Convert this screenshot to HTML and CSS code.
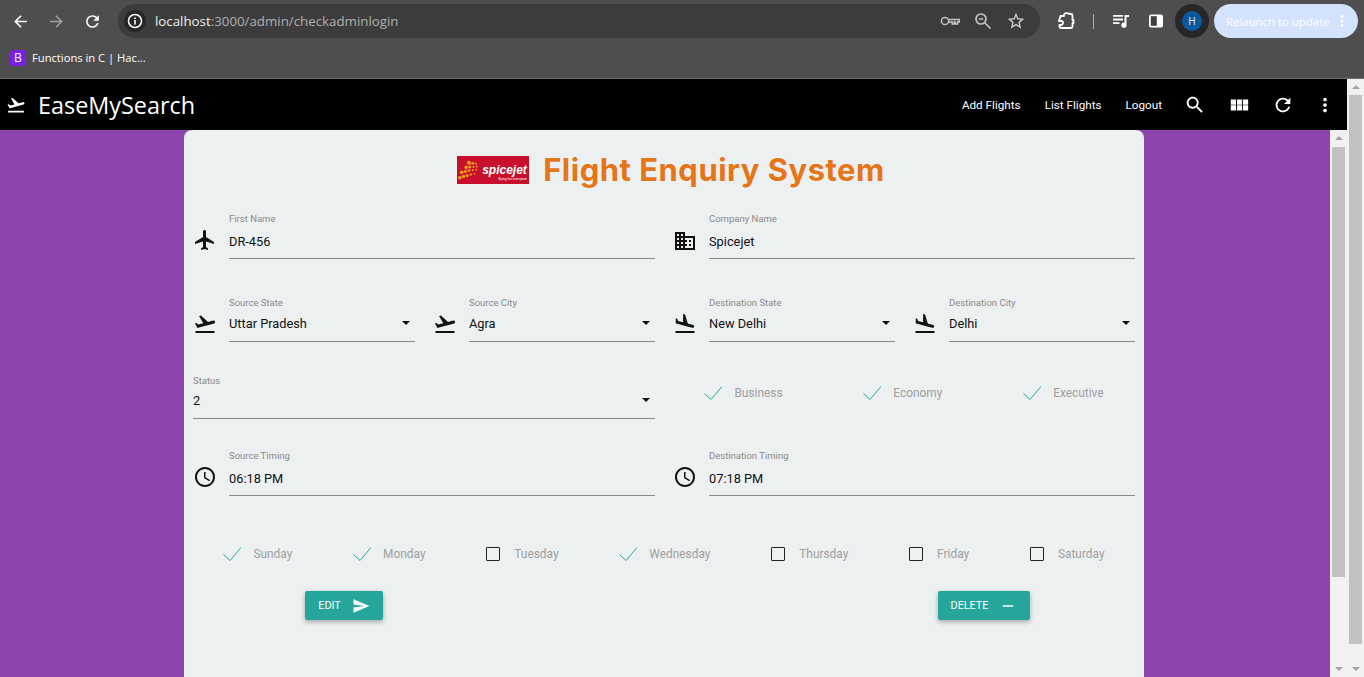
FILE: index.html
```html
<!DOCTYPE html>
<html lang="en">
<head>
    <meta charset="UTF-8">
    <meta name="viewport" content="width=device-width, initial-scale=1.0">
    <title>EaseMySearch</title>
    <link rel="stylesheet" href="styles.css">
</head>
<body>
    <svg class="defs" width="0" height="0">
        <symbol id="i-flight" viewBox="0 0 24 24"><path d="M21 16v-2l-8-5V3.5c0-.83-.67-1.5-1.5-1.5S10 2.67 10 3.5V9l-8 5v2l8-2.5V19l-2 1.5V22l3.5-1 3.5 1v-1.5L13 19v-5.5l8 2.5z"/></symbol>
        <symbol id="i-takeoff" viewBox="0 0 24 24"><path d="M2.5 19h19v2h-19zm19.57-9.36c-.21-.8-1.04-1.28-1.84-1.06L14.92 10l-6.9-6.43-1.93.51 4.14 7.17-4.97 1.33-1.97-1.54-1.45.39 1.82 3.16.77 1.33 1.6-.43 5.31-1.42 4.35-1.16L21 11.49c.81-.23 1.28-1.05 1.07-1.85z"/></symbol>
        <symbol id="i-land" viewBox="0 0 24 24"><path d="M2.5 19h19v2h-19zm7.18-5.73l4.35 1.16 5.31 1.42c.8.21 1.62-.26 1.84-1.06.21-.8-.26-1.62-1.06-1.84l-5.31-1.42-2.76-9.02L10.12 2v8.28L5.15 8.95l-.93-2.32-1.45-.39v5.17l1.6.43 5.31 1.43z"/></symbol>
        <symbol id="i-business" viewBox="0 0 24 24"><path d="M12 7V3H2v18h20V7H12zM6 19H4v-2h2v2zm0-4H4v-2h2v2zm0-4H4V9h2v2zm0-4H4V5h2v2zm4 12H8v-2h2v2zm0-4H8v-2h2v2zm0-4H8V9h2v2zm0-4H8V5h2v2zm10 12h-8v-2h2v-2h-2v-2h2v-2h-2V9h8v10zm-2-8h-2v2h2v-2zm0 4h-2v2h2v-2z"/></symbol>
        <symbol id="i-clock" viewBox="0 0 24 24"><path d="M11.99 2C6.47 2 2 6.48 2 12s4.47 10 9.99 10C17.52 22 22 17.52 22 12S17.52 2 11.99 2zM12 20c-4.42 0-8-3.58-8-8s3.58-8 8-8 8 3.58 8 8-3.58 8-8 8zm.5-13H11v6l5.25 3.15.75-1.23-4.5-2.67z"/></symbol>
        <symbol id="i-search" viewBox="0 0 24 24"><path d="M15.5 14h-.79l-.28-.27C15.41 12.59 16 11.11 16 9.5 16 5.91 13.09 3 9.5 3S3 5.91 3 9.5 5.91 16 9.5 16c1.61 0 3.09-.59 4.23-1.57l.27.28v.79l5 4.99L20.49 19l-4.99-5zm-6 0C7.01 14 5 11.99 5 9.5S7.01 5 9.5 5 14 7.01 14 9.5 11.99 14 9.5 14z"/></symbol>
        <symbol id="i-module" viewBox="0 0 24 24"><path d="M3 11.6h5.8V6H3v5.6zm0 6.4h5.8v-5.6H3V18zm6.8 0h5.4v-5.6H9.8V18zm6.4 0H22v-5.6h-5.8V18zM9.8 11.6h5.4V6H9.8v5.6zM16.2 6v5.6H22V6h-5.8z"/></symbol>
        <symbol id="i-refresh" viewBox="0 0 24 24"><path d="M17.65 6.35C16.2 4.9 14.21 4 12 4c-4.42 0-7.99 3.58-7.99 8s3.57 8 7.99 8c3.73 0 6.84-2.55 7.73-6h-2.08c-.82 2.33-3.04 4-5.65 4-3.31 0-6-2.69-6-6s2.69-6 6-6c1.66 0 3.14.69 4.22 1.78L13 11h7V4l-2.35 2.35z"/></symbol>
        <symbol id="i-more" viewBox="0 0 24 24"><path d="M12 8c1.1 0 2-.9 2-2s-.9-2-2-2-2 .9-2 2 .9 2 2 2zm0 2c-1.1 0-2 .9-2 2s.9 2 2 2 2-.9 2-2-.9-2-2-2zm0 6c-1.1 0-2 .9-2 2s.9 2 2 2 2-.9 2-2-.9-2-2-2z"/></symbol>
        <symbol id="i-send" viewBox="0 0 24 24"><path d="M2.01 21L23 12 2.01 3 2 10l15 2-15 2z"/></symbol>
        <symbol id="i-remove" viewBox="0 0 24 24"><path d="M19 13H5v-2h14v2z"/></symbol>
        <symbol id="i-back" viewBox="0 0 24 24"><path d="M20 11H7.83l5.59-5.59L12 4l-8 8 8 8 1.41-1.41L7.83 13H20v-2z"/></symbol>
        <symbol id="i-forward" viewBox="0 0 24 24"><path d="M12 4l-1.41 1.41L16.17 11H4v2h12.17l-5.58 5.59L12 20l8-8z"/></symbol>
        <symbol id="i-star" viewBox="0 0 24 24"><path d="M22 9.24l-7.19-.62L12 2 9.19 8.63 2 9.24l5.46 4.73L5.82 21 12 17.27 18.18 21l-1.63-7.03L22 9.24zM12 15.4l-3.76 2.27 1-4.28-3.32-2.88 4.38-.38L12 6.1l1.71 4.04 4.38.38-3.32 2.88 1 4.28L12 15.4z"/></symbol>
        <symbol id="i-check" viewBox="0 0 18 14"><polyline points="0.5,7.5 7,13.5 18,0.5"/></symbol>
    </svg>

    <!-- browser top -->
    <header class="browser">
        <div class="toolbar">
            <button class="tool"><svg class="ico"><use href="#i-back"/></svg></button>
            <button class="tool tool-off"><svg class="ico"><use href="#i-forward"/></svg></button>
            <button class="tool"><svg class="ico"><use href="#i-refresh"/></svg></button>
            <div class="omnibox">
                <span class="site-info">
                    <svg width="16" height="16" viewBox="0 0 16 16"><circle cx="8" cy="8" r="6.5" fill="none" stroke="#fff" stroke-width="1.5"/><rect x="7.2" y="7" width="1.6" height="4.6" fill="#fff"/><rect x="7.2" y="4.4" width="1.6" height="1.6" fill="#fff"/></svg>
                </span>
                <span class="url"><b>localhost</b>:3000/admin/checkadminlogin</span>
                <span class="omni-icons">
                    <svg width="20" height="20" viewBox="0 0 20 20" fill="none" stroke="#c4c4c4" stroke-width="1.5"><circle cx="5" cy="10" r="3.6"/><path d="M8.6 8.4h10.6v2.6h-1.6v2h-2.2v-2h-1.2v2h-2v-2H8.6"/></svg>
                    <svg width="20" height="20" viewBox="0 0 20 20" fill="none" stroke="#c4c4c4" stroke-width="1.7"><circle cx="8" cy="8" r="5"/><path d="M12 12l5.5 5.5M5.8 8h4.4"/></svg>
                    <svg class="ico-star"><use href="#i-star"/></svg>
                </span>
            </div>
            <svg class="puzzle" width="20" height="20" viewBox="0 0 20 20" fill="none" stroke="#fff" stroke-width="1.8" stroke-linejoin="round"><path d="M4.5 5H8V4a2 2 0 0 1 2.2-1.8L15 3a1.5 1.5 0 0 1 1.5 1.5V9h1v3h-1v3.5A1.5 1.5 0 0 1 15 17H5a1.5 1.5 0 0 1-1.5-1.5V14H5a2 2 0 0 0 0-4H3l1.5-5z"/></svg>
            <span class="sep"></span>
            <svg class="queue" width="18" height="18" viewBox="0 0 18 18" fill="#fff"><path d="M1 3h10v1.8H1zM1 6.6h10v1.8H1zM1 10.2h6.5V12H1z"/><path d="M12.5 3H17v2h-2.5v8.2a2.6 2.6 0 1 1-2-2.5z"/></svg>
            <svg class="panel" width="16" height="16" viewBox="0 0 16 16"><rect x="1" y="1.5" width="14" height="13" rx="2" fill="#fff"/><rect x="2.8" y="3.2" width="6" height="9.6" fill="#3f3f3f"/></svg>
            <span class="avatar"><span class="avatar-in">H</span></span>
            <div class="relaunch">Relaunch to update<svg class="relaunch-more"><use href="#i-more"/></svg></div>
        </div>
        <div class="bookmarks">
            <span class="bm-icon">B</span>
            <span class="bm-text">Functions in C | Hac...</span>
        </div>
    </header>

    <div class="viewport">
        <div class="app">
            <nav class="navbar">
                <svg class="nav-plane"><use href="#i-takeoff"/></svg>
                <a class="brand">EaseMySearch</a>
                <ul class="nav-links">
                    <li>Add Flights</li>
                    <li>List Flights</li>
                    <li>Logout</li>
                </ul>
                <div class="nav-icons">
                    <svg class="ico"><use href="#i-search"/></svg>
                    <svg class="ico"><use href="#i-module"/></svg>
                    <svg class="ico"><use href="#i-refresh"/></svg>
                    <svg class="ico"><use href="#i-more"/></svg>
                </div>
            </nav>

            <div class="content">
                <main class="main">
                    <section class="card">
                        <div class="card-head">
                            <div class="logo">
                                <svg class="logo-dots" width="22" height="21" viewBox="0 0 24 22" fill="#f59a1c">
                                    <circle cx="2" cy="19" r="2"/><circle cx="6" cy="17.6" r="1.9"/><circle cx="10" cy="16.4" r="1.7"/><circle cx="14" cy="15.4" r="1.3"/><circle cx="18" cy="14.6" r="1"/>
                                    <circle cx="4" cy="13" r="2"/><circle cx="8" cy="12" r="1.8"/><circle cx="12" cy="11.2" r="1.5"/><circle cx="16" cy="10.6" r="1.2"/><circle cx="20" cy="10.2" r="1"/>
                                    <circle cx="9" cy="7.5" r="2"/><circle cx="13" cy="7.2" r="1.6"/><circle cx="17" cy="7" r="1.2"/><circle cx="20.5" cy="6.6" r="1"/>
                                    <circle cx="12" cy="2.6" r="2.2"/><circle cx="16.2" cy="3.2" r="1.6"/><circle cx="19.6" cy="3.6" r="1.1"/>
                                </svg>
                                <div class="logo-text">
                                    <span class="logo-name">spicejet</span>
                                    <span class="logo-tag">flying for everyone</span>
                                </div>
                            </div>
                            <h1 class="title">Flight Enquiry System</h1>
                        </div>

                        <div class="form-row row-name">
                            <div class="cell span-2">
                                <svg class="field-icon"><use href="#i-flight"/></svg>
                                <div class="field"><label>First Name</label><div class="value">DR-456</div></div>
                            </div>
                            <div class="cell span-2">
                                <svg class="field-icon icon-low"><use href="#i-business"/></svg>
                                <div class="field"><label>Company Name</label><div class="value">Spicejet</div></div>
                            </div>
                        </div>

                        <div class="form-row row-place">
                            <div class="cell">
                                <svg class="field-icon"><use href="#i-takeoff"/></svg>
                                <div class="field field-select"><label>Source State</label><div class="value">Uttar Pradesh<span class="caret"></span></div></div>
                            </div>
                            <div class="cell">
                                <svg class="field-icon"><use href="#i-takeoff"/></svg>
                                <div class="field field-select"><label>Source City</label><div class="value">Agra<span class="caret"></span></div></div>
                            </div>
                            <div class="cell">
                                <svg class="field-icon"><use href="#i-land"/></svg>
                                <div class="field field-select"><label>Destination State</label><div class="value">New Delhi<span class="caret"></span></div></div>
                            </div>
                            <div class="cell">
                                <svg class="field-icon"><use href="#i-land"/></svg>
                                <div class="field field-select"><label>Destination City</label><div class="value">Delhi<span class="caret"></span></div></div>
                            </div>
                        </div>

                        <div class="form-row row-status">
                            <div class="cell span-2">
                                <div class="field field-status"><label>Status</label><div class="value">2<span class="caret"></span></div></div>
                            </div>
                            <div class="checks span-2">
                                <span class="check-item"><svg class="tick"><use href="#i-check"/></svg>Business</span>
                                <span class="check-item"><svg class="tick"><use href="#i-check"/></svg>Economy</span>
                                <span class="check-item"><svg class="tick"><use href="#i-check"/></svg>Executive</span>
                            </div>
                        </div>

                        <div class="form-row row-time">
                            <div class="cell span-2">
                                <svg class="field-icon"><use href="#i-clock"/></svg>
                                <div class="field"><label>Source Timing</label><div class="value">06:18 PM</div></div>
                            </div>
                            <div class="cell span-2">
                                <svg class="field-icon"><use href="#i-clock"/></svg>
                                <div class="field"><label>Destination Timing</label><div class="value">07:18 PM</div></div>
                            </div>
                        </div>

                        <div class="days">
                            <span class="check-item"><svg class="tick"><use href="#i-check"/></svg>Sunday</span>
                            <span class="check-item"><svg class="tick"><use href="#i-check"/></svg>Monday</span>
                            <span class="check-item"><span class="box"></span>Tuesday</span>
                            <span class="check-item"><svg class="tick"><use href="#i-check"/></svg>Wednesday</span>
                            <span class="check-item"><span class="box"></span>Thursday</span>
                            <span class="check-item"><span class="box"></span>Friday</span>
                            <span class="check-item"><span class="box"></span>Saturday</span>
                        </div>

                        <div class="actions">
                            <div class="action-col"><button class="btn">Edit<svg class="btn-icon"><use href="#i-send"/></svg></button></div>
                            <div class="action-col"></div>
                            <div class="action-col"><button class="btn">Delete<svg class="btn-icon"><use href="#i-remove"/></svg></button></div>
                        </div>
                    </section>
                </main>
                <div class="scrollbar">
                    <span class="sb-up"></span>
                    <span class="sb-thumb sb-thumb-inner"></span>
                    <span class="sb-down"></span>
                </div>
            </div>
        </div>
        <div class="scrollbar">
            <span class="sb-up"></span>
            <span class="sb-thumb sb-thumb-outer"></span>
            <span class="sb-down"></span>
        </div>
    </div>
</body>
</html>
```

FILE: styles.css
```css
/* Global Styles */
* {
    box-sizing: border-box;
    margin: 0;
    padding: 0;
}
html, body {
    height: 677px;
    overflow: hidden;
}
body {
    font-family: Roboto, Arial, sans-serif;
    background: #4f4f4f;
    display: flex;
    flex-direction: column;
}
.defs {
    position: absolute;
}
.ico {
    width: 22px;
    height: 22px;
    fill: #fff;
}

/* Browser top */
.browser {
    height: 79px;
    flex: none;
    background: #4e4e4e;
    border-bottom: 1px solid #6e6e6e;
    font-family: "Open Sans", Arial, sans-serif;
}
.toolbar {
    height: 42px;
    display: flex;
    align-items: center;
    padding-left: 2px;
}
.tool {
    width: 36px;
    height: 36px;
    background: none;
    border: none;
    display: flex;
    align-items: center;
    justify-content: center;
}
.tool .ico {
    width: 19px;
    height: 19px;
}
.tool-off .ico {
    fill: #a0a0a0;
}
.omnibox {
    width: 922px;
    height: 34px;
    margin-left: 8px;
    border-radius: 17px;
    background: #3c3c3c;
    display: flex;
    align-items: center;
    padding-left: 6px;
}
.site-info {
    width: 22px;
    height: 22px;
    border-radius: 50%;
    background: #272727;
    display: flex;
    align-items: center;
    justify-content: center;
}
.url {
    margin-left: 9px;
    font-size: 13.3px;
    color: #b0b0b0;
}
.url b {
    font-weight: 400;
    color: #f0f0f0;
}
.omni-icons {
    margin-left: auto;
    margin-right: 14px;
    display: flex;
    align-items: center;
    gap: 13px;
}
.ico-star {
    width: 20px;
    height: 20px;
    fill: #d0d0d0;
}
.puzzle {
    margin-left: 16px;
}
.sep {
    width: 1px;
    height: 15px;
    margin-left: 17px;
    background: #d8a0a8;
}
.queue {
    margin-left: 18px;
}
.panel {
    margin-left: 18px;
}
.avatar {
    width: 34px;
    height: 34px;
    margin-left: 11px;
    border-radius: 50%;
    background: #272727;
    display: flex;
    align-items: center;
    justify-content: center;
}
.avatar-in {
    width: 20px;
    height: 20px;
    border-radius: 50%;
    background: #0b57a0;
    color: #e8f0fe;
    font-size: 10px;
    line-height: 20px;
    text-align: center;
}
.relaunch {
    width: 144px;
    height: 34px;
    margin-left: 5px;
    border-radius: 17px;
    background: #d3e3fd;
    color: #fff;
    font-size: 11.4px;
    display: flex;
    align-items: center;
    padding-left: 12px;
    white-space: nowrap;
}
.relaunch-more {
    width: 18px;
    height: 18px;
    margin-left: 3px;
    fill: #fff;
}
.bookmarks {
    height: 36px;
    display: flex;
    align-items: center;
    padding: 0 0 5px 10px;
}
.bm-icon {
    width: 16px;
    height: 16px;
    border-radius: 3px;
    background: #7a1fe8;
    color: #fff;
    font-size: 12px;
    line-height: 16px;
    text-align: center;
}
.bm-text {
    margin-left: 6px;
    font-size: 11.2px;
    color: #fff;
}

/* Page */
.viewport {
    flex: 1;
    display: flex;
    min-height: 0;
}
.app {
    flex: 1;
    display: flex;
    flex-direction: column;
    min-width: 0;
}
.navbar {
    height: 51px;
    flex: none;
    background: #000;
    color: #fff;
    display: flex;
    align-items: center;
    padding-left: 6px;
}
.nav-plane {
    width: 20px;
    height: 20px;
    fill: #fff;
}
.brand {
    margin-left: 12px;
    font-family: "Open Sans", Arial, sans-serif;
    font-size: 23.4px;
}
.nav-links {
    margin-left: auto;
    list-style: none;
    display: flex;
    gap: 24px;
    font-size: 11.7px;
}
.nav-icons {
    display: flex;
    gap: 22px;
    margin-left: 22px;
    margin-right: 11px;
}
.nav-icons .ico:last-child {
    margin-left: -2px;
}
.content {
    flex: 1;
    display: flex;
    min-height: 0;
}
.main {
    flex: 1;
    background: #8e44ad;
    padding-left: 184px;
    overflow: hidden;
}
.card {
    width: 960px;
    height: 640px;
    background: #ecf0f1;
    border-radius: 8px 8px 0 0;
    color: #111;
}
.card-head {
    height: 82px;
    padding-top: 22px;
    padding-left: 14px;
    display: flex;
    align-items: flex-start;
    justify-content: center;
    gap: 14px;
}
.logo {
    width: 72px;
    height: 28px;
    margin-top: 4px;
    background: #c8102e;
    display: flex;
    align-items: center;
    padding-left: 1px;
    color: #fff;
}
.logo-text {
    display: flex;
    flex-direction: column;
    align-items: flex-end;
    margin-left: 2px;
    padding-top: 6px;
}
.logo-name {
    font-family: "Liberation Sans", Arial, sans-serif;
    font-size: 12px;
    font-weight: 700;
    font-style: italic;
    line-height: 13px;
}
.logo-tag {
    font-size: 3.5px;
    line-height: 5px;
}
.title {
    font-family: Inter, Arial, sans-serif;
    font-size: 31px;
    font-weight: 700;
    line-height: 36px;
    color: #e67517;
    letter-spacing: 0.5px;
}

/* Form */
.form-row {
    display: grid;
    grid-template-columns: repeat(4, 240px);
}
.row-place {
    margin-top: 37px;
}
.row-status {
    margin-top: 32px;
}
.row-time {
    margin-top: 30px;
}
.cell {
    padding: 0 9px;
    display: flex;
    gap: 12px;
}
.span-2 {
    grid-column: span 2;
}
.field-icon {
    width: 24px;
    height: 24px;
    flex: none;
    margin-top: 16px;
    fill: #111;
}
.icon-low {
    margin-top: 17px;
}
.field {
    flex: 1;
}
.field label {
    display: block;
    height: 12px;
    font-size: 9.5px;
    line-height: 14px;
    color: #8a8a8a;
}
.value {
    position: relative;
    height: 24px;
    margin-top: 5px;
    padding-bottom: 5px;
    border-bottom: 1px solid #8a8a8a;
    font-size: 12.8px;
    line-height: 26px;
    box-sizing: content-box;
}
.field-select .value {
    margin-top: 3px;
    padding-bottom: 6px;
}
.field-status .value {
    margin-top: 2px;
    padding-bottom: 6px;
}
.caret {
    position: absolute;
    right: 5px;
    top: 10px;
    border-left: 4.5px solid transparent;
    border-right: 4.5px solid transparent;
    border-top: 4.5px solid #111;
}
.checks {
    display: flex;
    justify-content: space-around;
    align-items: flex-start;
    padding-top: 12px;
}
.check-item {
    display: flex;
    align-items: center;
    font-size: 11.9px;
    color: #9e9e9e;
}
.tick {
    width: 18px;
    height: 14px;
    margin-right: 12px;
    fill: none;
    stroke: #26a69a;
    stroke-width: 1;
}
.box {
    width: 14px;
    height: 14px;
    margin-right: 14px;
    border: 1.5px solid #222;
    border-radius: 1px;
}
.days {
    margin-top: 50px;
    padding: 0 9px;
    height: 16px;
    display: flex;
    justify-content: space-around;
    align-items: center;
}
.actions {
    margin-top: 29px;
    display: grid;
    grid-template-columns: repeat(3, 320px);
}
.action-col {
    display: flex;
    justify-content: center;
}
.btn {
    height: 29px;
    padding: 0 13px;
    background: #26a69a;
    color: #fff;
    border: none;
    border-radius: 2px;
    font-family: inherit;
    font-size: 10.8px;
    text-transform: uppercase;
    display: flex;
    align-items: center;
    box-shadow: 0 2px 5px rgba(0, 0, 0, 0.3);
}
.btn-icon {
    width: 18px;
    height: 18px;
    margin-left: 11px;
    fill: #fff;
}

/* Scrollbars */
.scrollbar {
    width: 17px;
    flex: none;
    background: #f1f1f1;
    display: flex;
    flex-direction: column;
    align-items: center;
}
.sb-up, .sb-down {
    width: 0;
    height: 0;
    flex: none;
    border-left: 4px solid transparent;
    border-right: 4px solid transparent;
}
.sb-up {
    margin-top: 6px;
    border-bottom: 4px solid #a3a3a3;
}
.sb-down {
    margin-top: auto;
    margin-bottom: 6px;
    border-top: 4px solid #a3a3a3;
}
.sb-thumb {
    width: 13px;
    flex: none;
    background: #c1c1c1;
}
.sb-thumb-inner {
    margin-top: 7px;
    height: 430px;
}
.sb-thumb-outer {
    margin-top: 6px;
    height: 549px;
}
```
